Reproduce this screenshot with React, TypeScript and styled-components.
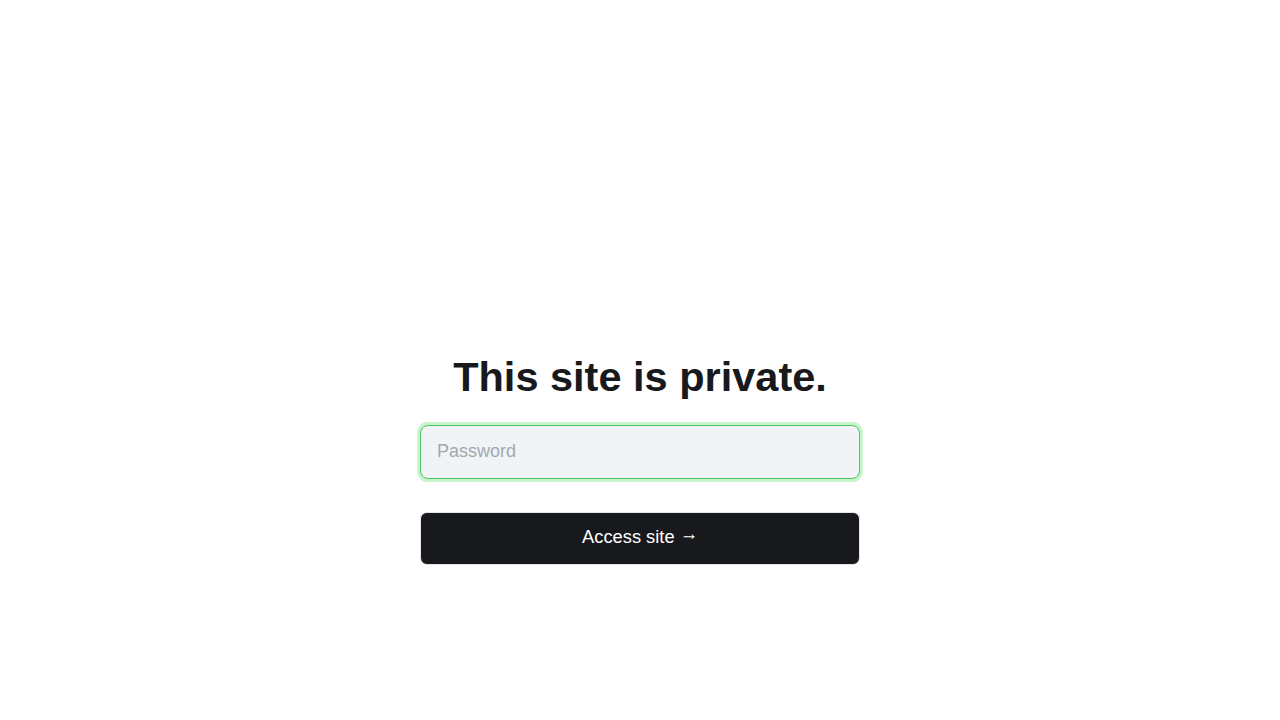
import styled, { createGlobalStyle } from "styled-components";

const GlobalStyle = createGlobalStyle`
  * {
    box-sizing: border-box;
  }
  body {
    margin: 0;
    background: #ffffff;
    font-family: "Liberation Sans", Arial, sans-serif;
  }
`;

function App() {
  return (
    <>
      <GlobalStyle />
      <Page>
        <Form onSubmit={(e) => e.preventDefault()}>
          <Title>This site is private.</Title>
          <PasswordInput type="password" placeholder="Password" />
          <SubmitButton type="submit">
            Access site <Arrow>→</Arrow>
          </SubmitButton>
        </Form>
      </Page>
    </>
  );
}

const Page = styled.main`
  width: 1280px;
  height: 720px;
  display: flex;
  justify-content: center;
  padding-top: 350px;
`;

const Form = styled.form`
  width: 440px;
  display: flex;
  flex-direction: column;
  align-items: center;
`;

const Title = styled.h1`
  margin: 0 0 21px;
  font-size: 41.5px;
  line-height: 54px;
  font-weight: 700;
  color: #18191c;
`;

const PasswordInput = styled.input`
  width: 440px;
  height: 54px;
  padding: 0 16px 2px;
  border: 1px solid #4cc35c;
  border-radius: 8px;
  background: #f1f4f6;
  box-shadow: 0 0 0 3px #c8f5d0;
  font-family: inherit;
  font-size: 18px;
  color: #18191c;
  outline: none;

  &::placeholder {
    color: #a2a7ae;
  }
`;

const SubmitButton = styled.button`
  margin-top: 33px;
  width: 440px;
  height: 53px;
  padding: 0 0 4px;
  border: 1px solid #e3e5e8;
  border-radius: 7px;
  background: #18191d;
  color: #ffffff;
  font-family: inherit;
  font-size: 18.3px;
  line-height: 20px;
  cursor: pointer;
`;

const Arrow = styled.span`
  display: inline-block;
  transform: translateY(-3px);
`;

export default App;
